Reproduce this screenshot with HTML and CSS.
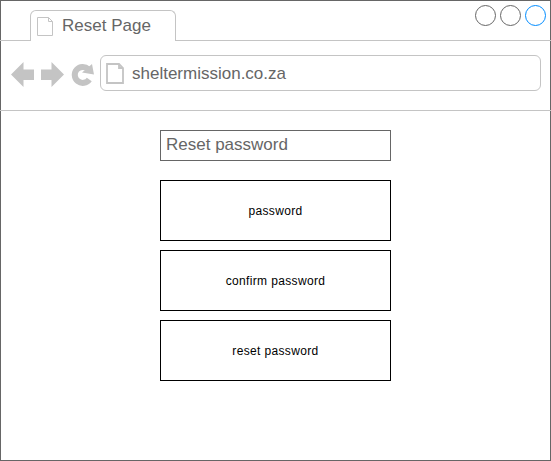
FILE: index.html
```html
<!DOCTYPE html>
<html lang="en">
<head>
<meta charset="utf-8">
<title>Reset Page</title>
<link rel="stylesheet" href="styles.css">
</head>
<body>
<div class="window">
  <header class="tabs">
    <div class="tab">
      <svg class="tab-icon" width="17" height="20" viewBox="0 0 17 20"><path d="M.5.5H11.500L15.500 4.500V18.500H.5ZM11.500.5V4.500H15.500"/></svg>
      <span>Reset Page</span>
    </div>
    <div class="controls"><i class="dot"></i><i class="dot"></i><i class="dot active"></i></div>
  </header>
  <nav class="toolbar">
    <svg class="nav-icons" width="84" height="26" viewBox="0 0 84 26">
      <path d="M0 12.500L12.500 0V7.500H23V18H12.500V25Z"/>
      <path d="M53 12.500L40.500 0V7.500H30V18H40.500V25Z"/>
      <path class="reload" d="M78.300 17.500A8 8 0 1 1 77.300 7.100"/>
      <path d="M81 2L83 12.500L71 10.500Z"/>
    </svg>
    <div class="address">
      <svg class="page-icon" width="18" height="21" viewBox="0 0 18 21"><path d="M1 1H13L17 5V20H1ZM13 1V5H17"/></svg>
      <span>sheltermission.co.za</span>
    </div>
  </nav>
  <main class="form">
    <div class="heading">Reset password</div>
    <div class="box">password</div>
    <div class="box">confirm password</div>
    <div class="box">reset password</div>
  </main>
</div>
</body>
</html>
```
FILE: styles.css
```css
* { box-sizing: border-box; }
body { margin: 0; background: #fff; font-family: "Liberation Sans", Arial, sans-serif; }
svg { display: block; flex: none; }
.window { width: 551px; height: 461px; border: 1px solid #666; }
.tabs { display: flex; justify-content: space-between; height: 40px; margin: 0 -1px; padding: 0 5px 0 30px; border-bottom: 1px solid #c4c4c4; }
.tab { display: flex; width: 146px; height: 31px; margin-top: 9px; padding: 0 0 0 6px; border: 1px solid #c4c4c4; border-bottom: 0; border-radius: 6px 6px 0 0; background: #fff; color: #666; font-size: 17px; line-height: 30px; }
.tab-icon { margin: 6px 8px 0 0; fill: none; stroke: #c4c4c4; }
.controls { display: flex; gap: 4px; padding-top: 4px; }
.dot { width: 21px; height: 21px; border: 1px solid #666; border-radius: 50%; }
.dot.active { border-color: #008cff; }
.toolbar { display: flex; height: 70px; margin: 0 -1px; padding: 14px 10px 0 11px; border-bottom: 1px solid #c4c4c4; }
.nav-icons { margin: 7px 5px 0 0; fill: #c4c4c4; }
.reload { fill: none; stroke: #c4c4c4; stroke-width: 6; }
.address { display: flex; flex: 1; height: 36px; padding-left: 5px; border: 1px solid #c4c4c4; border-radius: 6px; color: #666; font-size: 17px; line-height: 36px; }
.page-icon { margin: 7px 8px 0 0; fill: none; stroke: #c4c4c4; stroke-width: 1.8; }
.form { display: flex; flex-direction: column; width: 231px; margin: 19px 0 0 159px; gap: 9px; }
.heading { height: 31px; margin-bottom: 10px; padding-left: 5px; border: 1px solid #666; color: #666; font-size: 17px; line-height: 28px; }
.box { height: 61px; border: 1px solid #000; color: #000; font-size: 12px; letter-spacing: .35px; line-height: 60px; text-align: center; }
```
